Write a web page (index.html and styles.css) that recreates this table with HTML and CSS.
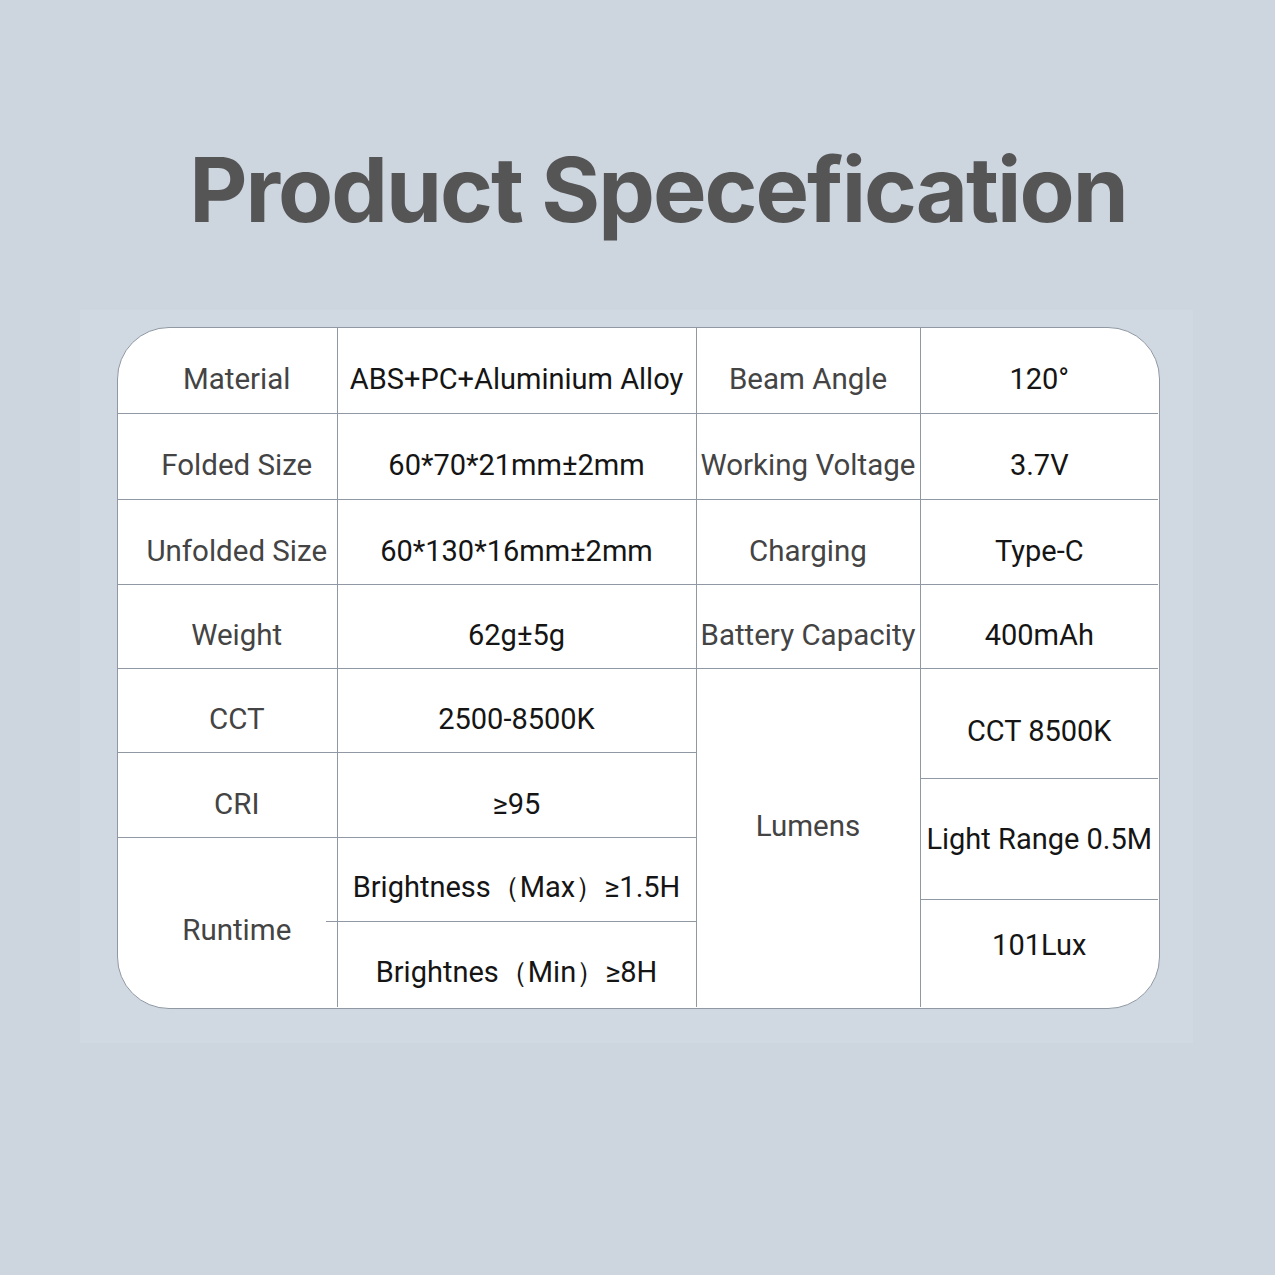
FILE: index.html
```html
<!DOCTYPE html>
<html>
<head>
<meta charset="utf-8">
<link rel="stylesheet" href="styles.css">
</head>
<body>
<h1 class="title">Product Specefication</h1>
<div class="panel">
  <div class="spec">
    <div class="cell label c1">Material</div>
    <div class="cell value">ABS+PC+Aluminium Alloy</div>
    <div class="cell label">Beam Angle</div>
    <div class="cell value last-col">120°</div>

    <div class="cell label c1">Folded Size</div>
    <div class="cell value">60*70*21mm±2mm</div>
    <div class="cell label">Working Voltage</div>
    <div class="cell value last-col">3.7V</div>

    <div class="cell label c1">Unfolded Size</div>
    <div class="cell value">60*130*16mm±2mm</div>
    <div class="cell label">Charging</div>
    <div class="cell value last-col">Type‑C</div>

    <div class="cell label c1">Weight</div>
    <div class="cell value">62g±5g</div>
    <div class="cell label">Battery Capacity</div>
    <div class="cell value last-col">400mAh</div>

    <div class="cell label c1">CCT</div>
    <div class="cell value">2500-8500K</div>
    <div class="cell label lumens">Lumens</div>
    <div class="lumens-values">
      <div class="cell value lv lv1">CCT 8500K</div>
      <div class="cell value lv lv2">Light Range 0.5M</div>
      <div class="cell value lv lv3">101Lux</div>
    </div>

    <div class="cell label c1">CRI</div>
    <div class="cell value">≥95</div>

    <div class="cell label c1 runtime">Runtime</div>
    <div class="cell value bmax">Brightness（Max）≥1.5H</div>
    <div class="cell value bmin">Brightnes（Min）≥8H</div>
  </div>
</div>
</body>
</html>
```
FILE: styles.css
```css
* { box-sizing: border-box; }
html, body {
  margin: 0;
  padding: 0;
  background: #cdd5df;
}
body {
  width: 1275px;
  height: 1275px;
  overflow: hidden;
}
.title {
  margin: 0;
  padding: 145px 0 0 41px;
  text-align: center;
  font-family: Inter, "Liberation Sans", sans-serif;
  font-weight: 700;
  font-size: 90px;
  line-height: 90px;
  color: #555555;
  letter-spacing: -2px;
}
.panel {
  margin: 75px 0 0 80px;
  width: 1113px;
  height: 733px;
  background: #d0d8e1;
  padding: 17px 0 0 37px;
}
.spec {
  width: 1043px;
  height: 682px;
  background: #ffffff;
  border: 1.5px solid #8f98a3;
  border-radius: 52px;
  overflow: hidden;
  display: grid;
  grid-template-columns: 219.5px 359px 224px 237.5px;
  grid-template-rows: 85.5px 86px 85px 84px 84px 85px 84px 85.5px;
  font-family: Roboto, "Liberation Sans", sans-serif;
}
.cell {
  display: flex;
  align-items: center;
  justify-content: center;
  border-right: 1.5px solid #8f98a3;
  border-bottom: 1.5px solid #8f98a3;
  padding-top: 18px;
  white-space: nowrap;
}
.label {
  color: #444444;
  font-size: 29.5px;
}
.value {
  color: #151515;
  font-size: 29px;
}
.c1 {
  padding-left: 19px;
}
.last-col {
  border-right: none;
}
.lumens {
  grid-column: 3;
  grid-row: 5 / 9;
  border-bottom: none;
  padding-top: 0;
  padding-bottom: 24px;
}
.lumens-values {
  grid-column: 4;
  grid-row: 5 / 9;
  display: flex;
  flex-direction: column;
}
.lv {
  border-right: none;
  padding-top: 16px;
}
.lv1 { height: 110px; }
.lv2 { height: 121px; padding-top: 0; }
.lv3 { flex: 1; border-bottom: none; padding-top: 0; padding-bottom: 16px; }
.runtime {
  grid-column: 1;
  grid-row: 7 / 9;
  border-bottom: none;
  padding-top: 16px;
}
.bmax {
  grid-column: 2;
  grid-row: 7;
  position: relative;
}
.bmax::after {
  content: "";
  position: absolute;
  left: -11.5px;
  bottom: -1.5px;
  width: 11.5px;
  height: 1.5px;
  background: #8f98a3;
}
.bmin {
  grid-column: 2;
  grid-row: 8;
  border-bottom: none;
}
```
